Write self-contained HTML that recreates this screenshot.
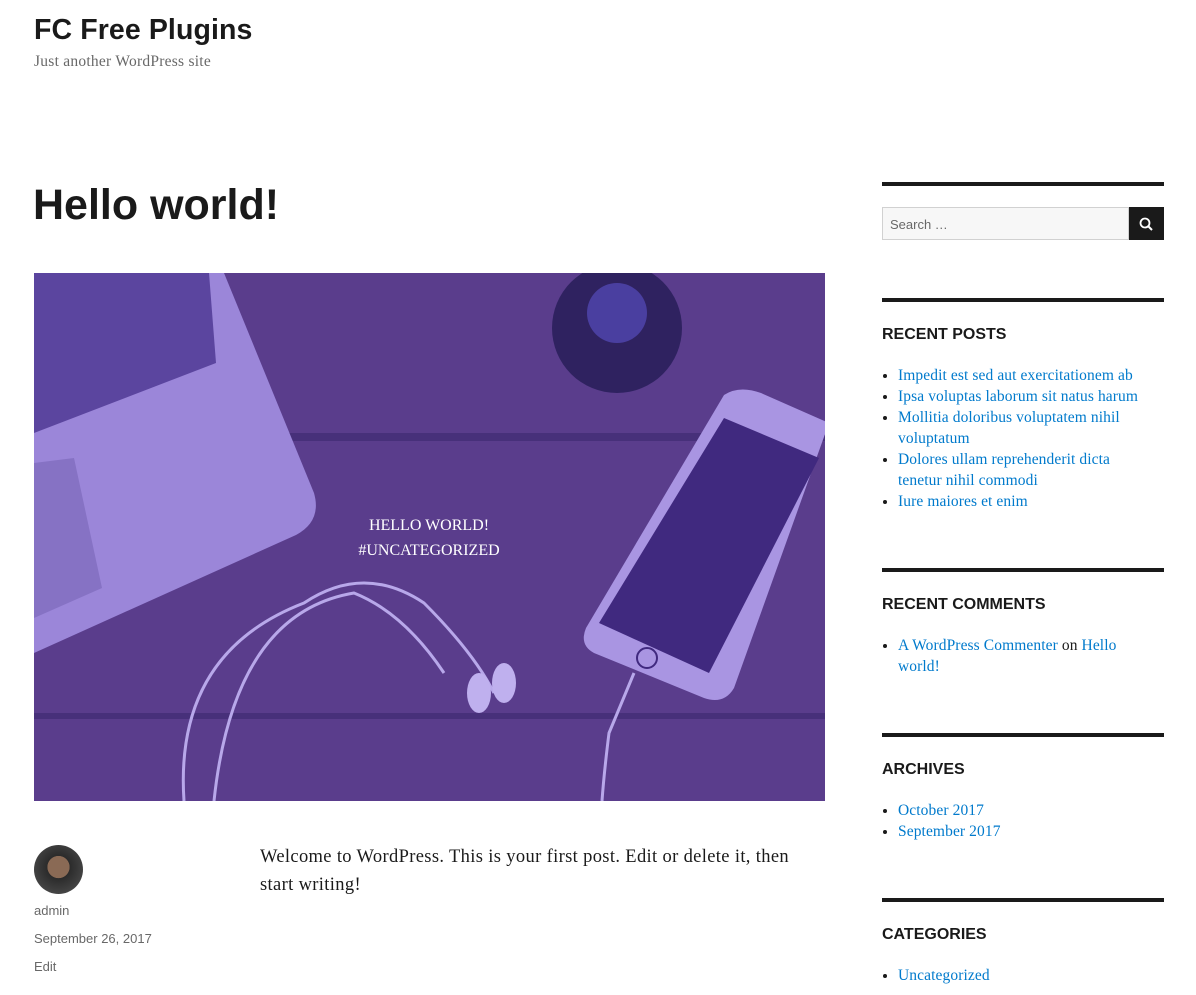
<!DOCTYPE html>
<html><head><meta charset="utf-8"><style>
body{margin:0;background:#fff;width:1196px;height:995px;overflow:hidden;position:relative;font-family:"Liberation Serif",serif;color:#1a1a1a}
.a{position:absolute}
.mont{font-family:"Liberation Sans",sans-serif;font-weight:bold}
a{color:#007acc;text-decoration:none}
.w{position:absolute;left:882px;width:282px;border-top:4px solid #1a1a1a}
.w h2{font-family:"Liberation Sans",sans-serif;font-weight:bold;font-size:16px;margin:24px 0 0;letter-spacing:0}
.w ul{margin:21px 0 0;padding-left:16px;font-size:15.5px;line-height:21px;letter-spacing:.1px}
.meta{font-family:"Liberation Sans",sans-serif;font-size:13px;color:#686868}
</style></head><body>
<div class="a mont" style="left:34px;top:14px;font-size:28.5px;letter-spacing:.1px">FC Free Plugins</div>
<div class="a" style="left:34px;top:53px;font-size:15.5px;letter-spacing:.25px;color:#686868">Just another WordPress site</div>
<div class="a mont" style="left:33px;top:181px;font-size:43px">Hello world!</div>
<svg class="a" style="left:34px;top:273px" width="791" height="528" viewBox="0 0 791 528">
<rect width="791" height="528" fill="#5a3d8c"/>
<rect y="160" width="791" height="8" fill="#47307a"/>
<rect y="440" width="791" height="6" fill="#47307a"/>
<path d="M0 0 H190 L280 220 Q288 248 262 262 L0 380 Z" fill="#9b86d9"/>
<path d="M0 0 H175 L182 90 L0 160Z" fill="#4b3590" opacity=".8"/>
<path d="M0 190 L40 185 L68 315 L0 345Z" fill="#8672c4"/>
<circle cx="583" cy="55" r="65" fill="#2f2260"/><circle cx="583" cy="40" r="30" fill="#4a3fa0"/>
<path d="M727 120 L795 150 L700 415 Q690 432 670 425 L560 380 Q545 372 552 355 L690 122 Q705 112 727 120Z" fill="#a995e2"/>
<path d="M690 145 L785 185 L675 400 L565 350Z" fill="#40297f"/>
<circle cx="613" cy="385" r="10" fill="none" stroke="#40297f" stroke-width="2"/>
<path d="M150 528 Q140 380 270 330 Q330 290 390 330 Q440 380 460 420 M180 528 Q200 340 320 320 Q370 340 410 400" fill="none" stroke="#b8a8ea" stroke-width="3"/>
<path d="M600 400 L575 460 Q570 500 568 528" fill="none" stroke="#b8a8ea" stroke-width="3"/>
<ellipse cx="445" cy="420" rx="12" ry="20" fill="#bfb0ee"/><ellipse cx="470" cy="410" rx="12" ry="20" fill="#bfb0ee"/>
<text x="395" y="257" fill="#fff" font-family="Liberation Serif,serif" font-size="16" text-anchor="middle">HELLO WORLD!</text>
<text x="395" y="282" fill="#fff" font-family="Liberation Serif,serif" font-size="16" text-anchor="middle">#UNCATEGORIZED</text>
</svg>
<div class="a" style="left:34px;top:845px;width:49px;height:49px;border-radius:50%;background:radial-gradient(circle at 50% 45%,#8a6a55 0 30%,#2b2b2b 31%,#555 100%)"></div>
<div class="a meta" style="left:34px;top:903px">admin</div>
<div class="a meta" style="left:34px;top:931px">September 26, 2017</div>
<div class="a meta" style="left:34px;top:959px">Edit</div>
<div class="a" style="left:260px;top:843px;width:600px;font-size:18.5px;line-height:28px;letter-spacing:.35px">Welcome to WordPress. This is your first post. Edit or delete it, then<br>start writing!</div>

<div class="w" style="top:182px">
<div style="margin-top:21px;height:33px;display:flex">
<div style="flex:1;border:1px solid #d1d1d1;background:#f7f7f7;font-family:'Liberation Sans',sans-serif;font-size:13px;color:#686868;line-height:33px;padding-left:7px">Search …</div>
<div style="width:35px;background:#1a1a1a;position:relative"><svg width="35" height="35" viewBox="0 0 35 35"><circle cx="16" cy="16" r="4.5" fill="none" stroke="#fff" stroke-width="1.8"/><path d="M19.5 19.5 L23 23" stroke="#fff" stroke-width="2"/></svg></div>
</div></div>
<div class="w" style="top:298px"><h2>RECENT POSTS</h2><ul>
<li><a>Impedit est sed aut exercitationem ab</a></li>
<li><a>Ipsa voluptas laborum sit natus harum</a></li>
<li><a>Mollitia doloribus voluptatem nihil<br>voluptatum</a></li>
<li><a>Dolores ullam reprehenderit dicta<br>tenetur nihil commodi</a></li>
<li><a>Iure maiores et enim</a></li></ul></div>
<div class="w" style="top:568px"><h2>RECENT COMMENTS</h2><ul>
<li><a>A WordPress Commenter</a> on <a>Hello<br>world!</a></li></ul></div>
<div class="w" style="top:733px"><h2>ARCHIVES</h2><ul>
<li><a>October 2017</a></li><li><a>September 2017</a></li></ul></div>
<div class="w" style="top:898px"><h2>CATEGORIES</h2><ul>
<li><a>Uncategorized</a></li></ul></div>
</body></html>
